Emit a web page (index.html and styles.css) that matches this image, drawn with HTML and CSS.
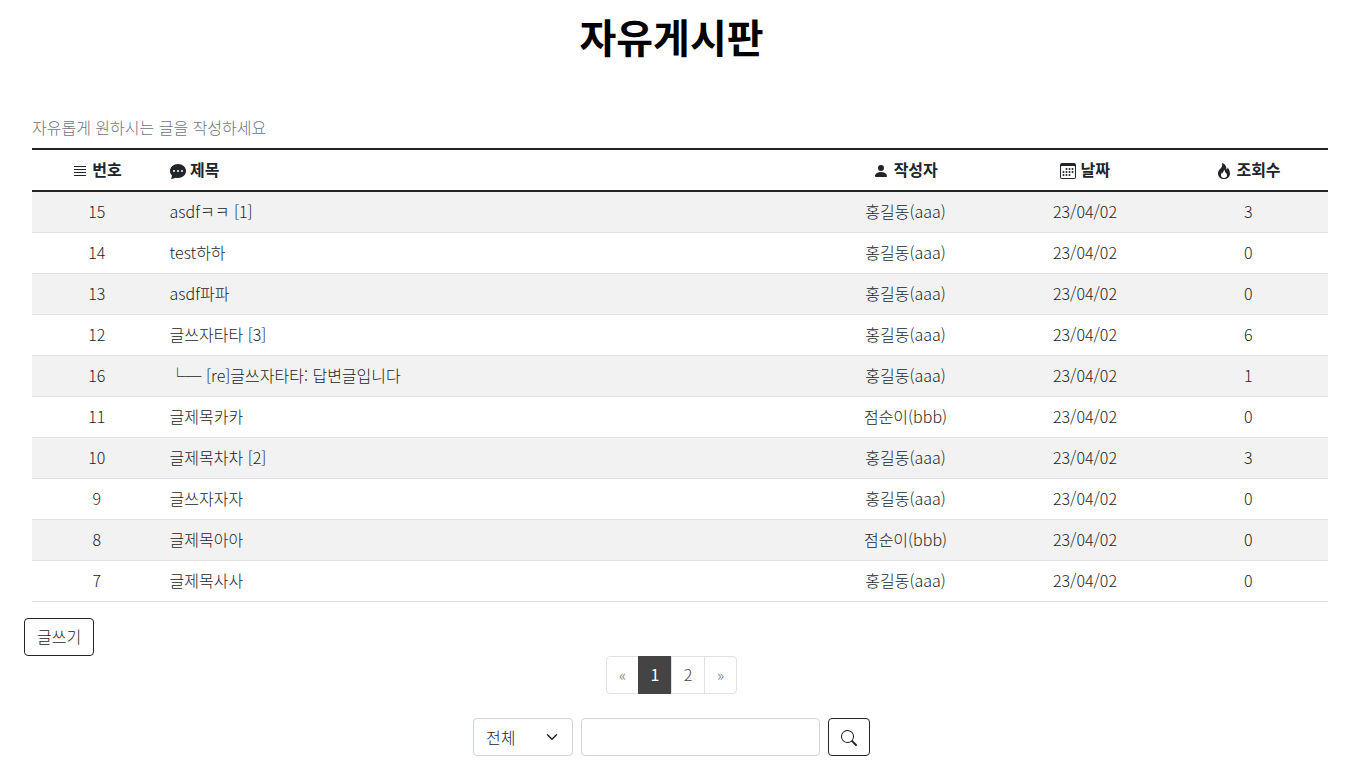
FILE: index.html
```html
<!DOCTYPE html>
<html lang="ko">
<head>
<meta charset="utf-8">
<meta name="viewport" content="width=device-width, initial-scale=1">
<title>자유게시판</title>
<link rel="stylesheet" href="styles.css">
</head>
<body>
<main class="page">
  <h1 class="page-title">자유게시판</h1>
  <section class="board">
    <p class="board-intro">자유롭게 원하시는 글을 작성하세요</p>
    <table class="board-table">
      <colgroup><col class="col-no"><col class="col-title"><col class="col-author"><col class="col-date"><col class="col-views"></colgroup>
      <thead>
        <tr>
          <th scope="col"><svg class="icon" viewBox="0 0 16 16" aria-hidden="true"><path d="M2 3h12v1H2zM2 6h12v1H2zM2 9h12v1H2zM2 12h12v1H2z"/></svg> 번호</th>
          <th scope="col" class="title"><svg class="icon" viewBox="0 0 16 16" aria-hidden="true"><path d="M16 8c0 3.866-3.582 7-8 7a9.06 9.06 0 0 1-2.347-.306c-.584.296-1.925.864-4.181 1.234-.2.032-.352-.176-.273-.362.354-.836.674-1.95.77-2.966C.744 11.37 0 9.76 0 8c0-3.866 3.582-7 8-7s8 3.134 8 7zM5 8a1 1 0 1 0-2 0 1 1 0 0 0 2 0zm4 0a1 1 0 1 0-2 0 1 1 0 0 0 2 0zm3 1a1 1 0 1 0 0-2 1 1 0 0 0 0 2z"/></svg> 제목</th>
          <th scope="col"><svg class="icon" viewBox="0 0 16 16" aria-hidden="true"><path d="M3 14s-1 0-1-1 1-4 6-4 6 3 6 4-1 1-1 1H3zm5-6a3 3 0 1 0 0-6 3 3 0 0 0 0 6z"/></svg> 작성자</th>
          <th scope="col"><svg class="icon" viewBox="0 0 16 16" aria-hidden="true"><path d="M14 0H2a2 2 0 0 0-2 2v12a2 2 0 0 0 2 2h12a2 2 0 0 0 2-2V2a2 2 0 0 0-2-2zM1 3.857C1 3.384 1.448 3 2 3h12c.552 0 1 .384 1 .857v10.286c0 .473-.448.857-1 .857H2c-.552 0-1-.384-1-.857V3.857z"/><path d="M6.5 7a1 1 0 1 0 0-2 1 1 0 0 0 0 2zm3 0a1 1 0 1 0 0-2 1 1 0 0 0 0 2zm3 0a1 1 0 1 0 0-2 1 1 0 0 0 0 2zm-9 3a1 1 0 1 0 0-2 1 1 0 0 0 0 2zm3 0a1 1 0 1 0 0-2 1 1 0 0 0 0 2zm3 0a1 1 0 1 0 0-2 1 1 0 0 0 0 2zm3 0a1 1 0 1 0 0-2 1 1 0 0 0 0 2zm-9 3a1 1 0 1 0 0-2 1 1 0 0 0 0 2zm3 0a1 1 0 1 0 0-2 1 1 0 0 0 0 2zm3 0a1 1 0 1 0 0-2 1 1 0 0 0 0 2z"/></svg> 날짜</th>
          <th scope="col"><svg class="icon" viewBox="0 0 16 16" aria-hidden="true"><path d="M8 16c3.314 0 6-2 6-5.5 0-1.5-.5-4-2.5-6 .25 1.5-1.25 2-1.25 2C11 4 9 .5 6 0c.357 2 .5 4-2 6-1.25 1-2 2.729-2 4.5C2 14 4.686 16 8 16zm0-1c-1.657 0-3-1-3-2.75 0-.75.25-2 1.25-3C6.125 10 7 10.5 7 10.5c-.375-1.25.5-3.25 2-3.5-.179 1-.25 2 1 3 .625.5 1 1.364 1 2.25C11 14 9.657 15 8 15z"/></svg> 조회수</th>
        </tr>
      </thead>
      <tbody>
        <tr><td>15</td><td class="title"><a href="#">asdfㅋㅋ [1]</a></td><td>홍길동(aaa)</td><td>23/04/02</td><td>3</td></tr>
        <tr><td>14</td><td class="title"><a href="#">test하하</a></td><td>홍길동(aaa)</td><td>23/04/02</td><td>0</td></tr>
        <tr><td>13</td><td class="title"><a href="#">asdf파파</a></td><td>홍길동(aaa)</td><td>23/04/02</td><td>0</td></tr>
        <tr><td>12</td><td class="title"><a href="#">글쓰자타타 [3]</a></td><td>홍길동(aaa)</td><td>23/04/02</td><td>6</td></tr>
        <tr><td>16</td><td class="title"><a href="#"><span class="reply-mark">└─</span> [re]글쓰자타타: 답변글입니다</a></td><td>홍길동(aaa)</td><td>23/04/02</td><td>1</td></tr>
        <tr><td>11</td><td class="title"><a href="#">글제목카카</a></td><td>점순이(bbb)</td><td>23/04/02</td><td>0</td></tr>
        <tr><td>10</td><td class="title"><a href="#">글제목차차 [2]</a></td><td>홍길동(aaa)</td><td>23/04/02</td><td>3</td></tr>
        <tr><td>9</td><td class="title"><a href="#">글쓰자자자</a></td><td>홍길동(aaa)</td><td>23/04/02</td><td>0</td></tr>
        <tr><td>8</td><td class="title"><a href="#">글제목아아</a></td><td>점순이(bbb)</td><td>23/04/02</td><td>0</td></tr>
        <tr><td>7</td><td class="title"><a href="#">글제목사사</a></td><td>홍길동(aaa)</td><td>23/04/02</td><td>0</td></tr>
      </tbody>
    </table>
  </section>
  <button class="btn" type="button">글쓰기</button>
  <nav class="pagination" aria-label="페이지">
    <a class="page-link step" href="#">«</a>
    <a class="page-link active" href="#" aria-current="page">1</a>
    <a class="page-link" href="#">2</a>
    <a class="page-link step" href="#">»</a>
  </nav>
  <form class="search">
    <div class="select-wrap">
      <select class="field" aria-label="검색 범위"><option>전체</option></select>
      <svg class="chevron" viewBox="0 0 16 16" aria-hidden="true"><path d="m2 5 6 6 6-6"/></svg>
    </div>
    <input class="field keyword" type="text" aria-label="검색어">
    <button class="btn" type="submit" aria-label="검색"><svg class="icon" viewBox="0 0 16 16" aria-hidden="true"><path d="M11.742 10.344a6.5 6.5 0 1 0-1.397 1.398h-.001c.03.04.062.078.098.115l3.85 3.85a1 1 0 0 0 1.415-1.414l-3.85-3.85a1.007 1.007 0 0 0-.115-.1zM12 6.5a5.5 5.5 0 1 1-11 0 5.5 5.5 0 0 1 11 0z"/></svg></button>
  </form>
</main>
</body>
</html>
```
FILE: styles.css
```css
* {
  box-sizing: border-box;
}

body {
  margin: 0;
  background: #fff;
  color: #212529;
  font: 300 16px/24px "Noto Sans CJK KR", "Noto Sans", sans-serif;
}

.page {
  padding: 12px 26px 16px 24px;
}

.page-title {
  margin: 0 0 55px;
  color: #000;
  font-size: 40px;
  font-weight: 700;
  line-height: 48px;
  text-align: center;
}

/* The board sits slightly to the right of the other blocks. */
.board {
  margin: 0 -9px 16px 8px;
}

.board-intro {
  margin: 0 0 9px;
  color: #6c757d;
}

.board-table {
  width: 100%;
  border-top: 2px solid #212529;
  border-spacing: 0;
  table-layout: fixed;
  text-align: center;
}

.col-no { width: 10%; }
.col-title { width: 50%; }
.col-author { width: 14.8%; }
.col-date { width: 12.9%; }
.col-views { width: 12.3%; }

.board-table th,
.board-table td {
  padding: 7px 8px 9px;
}

.board-table th {
  border-bottom: 2px solid #212529;
  font-weight: 700;
}

.board-table td {
  border-bottom: 1px solid #dee2e6;
}

.board-table .title {
  text-align: left;
}

.board-table tbody tr:nth-child(odd) {
  background: #f2f2f2;
}

.board-table a {
  color: inherit;
  text-decoration: none;
}

.reply-mark {
  font-weight: 100;
}

.icon {
  width: 16px;
  height: 16px;
  fill: currentColor;
  vertical-align: -3px;
}

.btn {
  display: block;
  padding: 5px 12px 7px;
  border: 1px solid #212529;
  border-radius: 4px;
  background: #fff;
  color: #212529;
  font: inherit;
}

.pagination {
  display: flex;
  justify-content: center;
  margin-bottom: 24px;
}

.page-link {
  width: 34px;
  padding: 5px 0 7px;
  border: 1px solid #dee2e6;
  color: #444;
  text-align: center;
  text-decoration: none;
}

.page-link + .page-link {
  margin-left: -1px;
}

.page-link:first-child {
  border-radius: 4px 0 0 4px;
}

.page-link:last-child {
  border-radius: 0 4px 4px 0;
}

.page-link.step {
  width: 33px;
  color: #6c757d;
}

.page-link.active {
  border-color: #444;
  background: #444;
  color: #fff;
  font-weight: 400;
}

.search {
  display: flex;
  justify-content: center;
  gap: 8px;
}

.select-wrap {
  position: relative;
  width: 100px;
}

.field {
  width: 100%;
  height: 38px;
  padding: 6px 12px;
  border: 1px solid #ced4da;
  border-radius: 4px;
  background: #fff;
  color: #212529;
  font: inherit;
  appearance: none;
}

.keyword {
  width: 239px;
}

.chevron {
  position: absolute;
  top: 13px;
  right: 15px;
  width: 12px;
  height: 12px;
  fill: none;
  stroke: #212529;
  stroke-width: 2;
  stroke-linecap: round;
  stroke-linejoin: round;
  pointer-events: none;
}
```
